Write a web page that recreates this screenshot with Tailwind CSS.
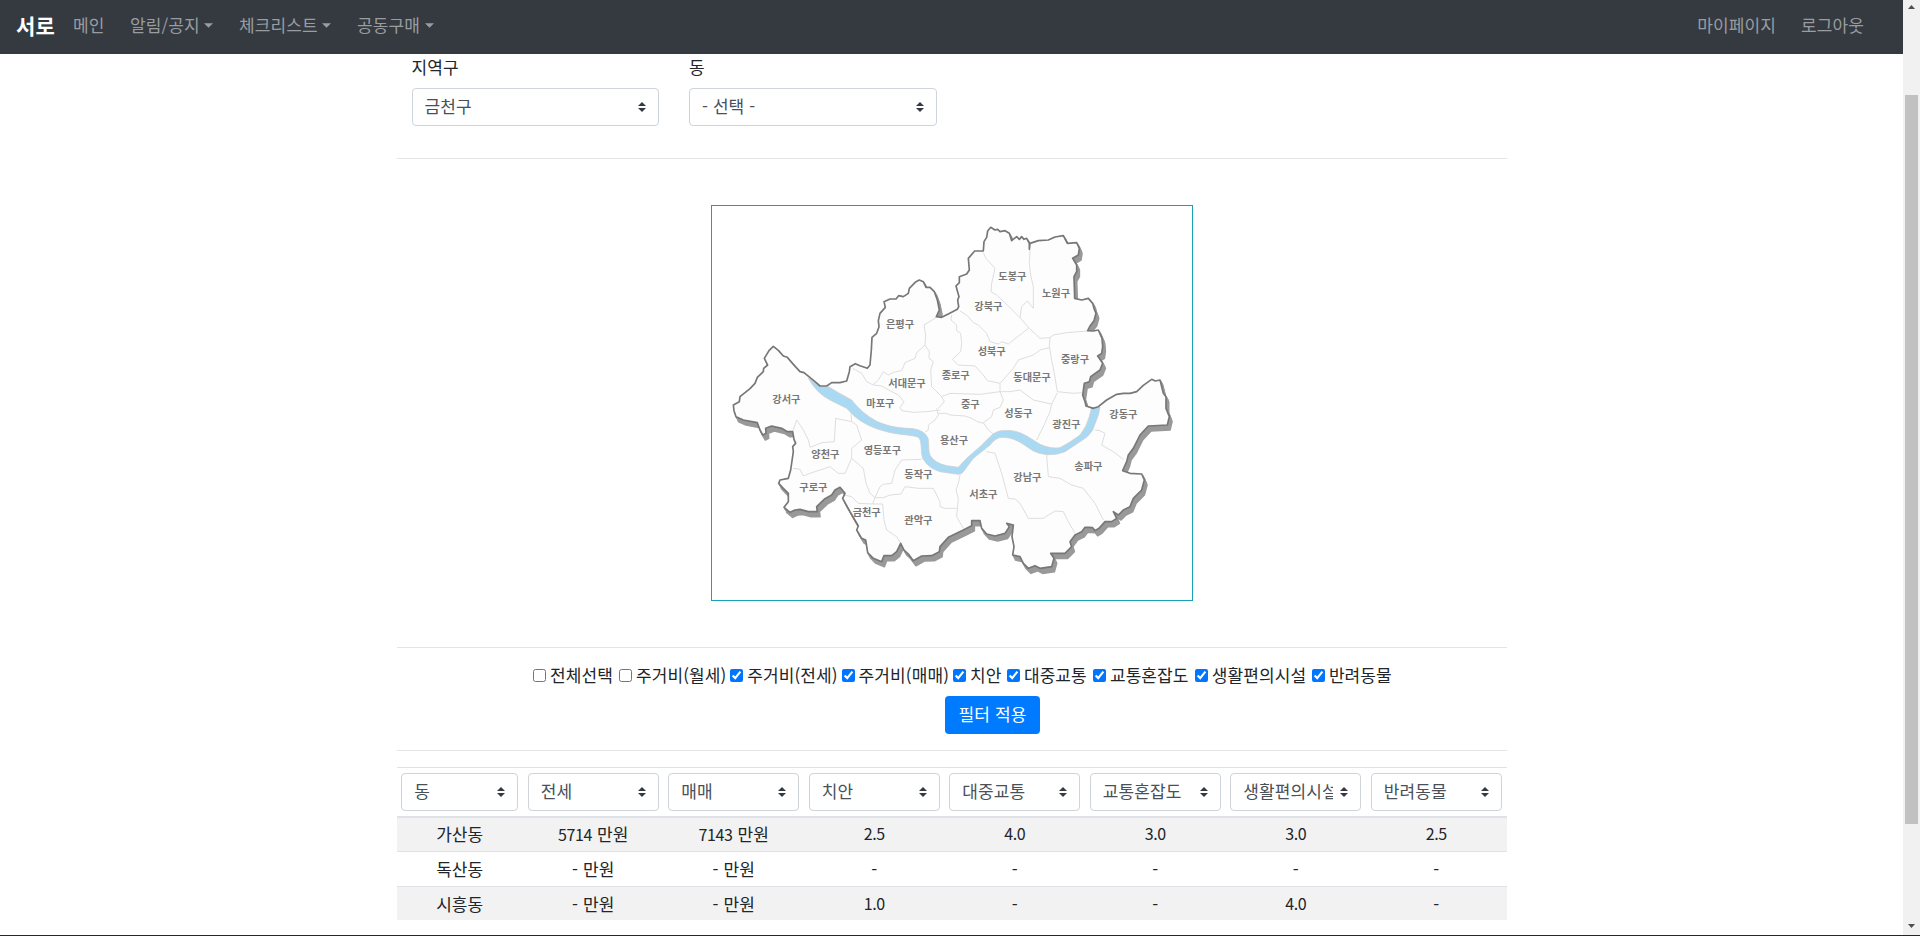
<!DOCTYPE html>
<html lang="ko">
<head>
<meta charset="utf-8">
<title>서로</title>
<script src="https://cdn.jsdelivr.net/npm/@tailwindcss/browser@4"></script>
</head>
<body class="flex h-[936px] w-[1920px] flex-col overflow-hidden bg-white font-['Noto_Sans_CJK_KR','Noto_Sans',sans-serif] text-[17px] leading-6 font-normal tracking-[0.1px] text-[#212529]">
<svg class="hidden">
  <symbol id="updown" viewBox="0 0 4 5"><path fill="#343a40" d="M2 0L0 2h4zm0 5L0 3h4z"/></symbol>
  <symbol id="caret" viewBox="0 0 10 5"><path fill="currentColor" d="M0 0h10L5 5z"/></symbol>
</svg>
<div class="flex h-[935px]">
  <div class="w-[1903px]">
    <nav class="flex h-[54px] items-center bg-[#343a40] pb-1 pl-4 pr-[39px] text-[#9a9da0]">
      <a class="mr-[17px] w-10 text-[21px] font-bold whitespace-nowrap text-white">서로</a>
      <a class="w-[57px]">메인</a>
      <a class="flex w-[109px] items-center gap-1"><span class="w-[70px] whitespace-nowrap">알림/공지</span><svg class="h-[5px] w-[9px]"><use href="#caret"/></svg></a>
      <a class="flex w-[118px] items-center gap-1"><span class="w-[79px] whitespace-nowrap">체크리스트</span><svg class="h-[5px] w-[9px]"><use href="#caret"/></svg></a>
      <a class="flex items-center gap-1"><span class="w-[64px] whitespace-nowrap">공동구매</span><svg class="h-[5px] w-[9px]"><use href="#caret"/></svg></a>
      <a class="ml-auto mr-[25px]">마이페이지</a>
      <a>로그아웃</a>
    </nav>
    <main class="mx-auto w-[1110px] pt-px">
      <div class="flex gap-[30px] pl-[15px] pb-8">
        <div class="w-[247.5px]">
          <div class="mb-[9px] h-6 leading-6">지역구</div>
          <div class="flex h-[38px] items-center justify-between rounded border border-[#ced4da] px-3 pb-0.5 text-[#495057]"><span>금천구</span><svg class="mt-0.5 h-2.5 w-2"><use href="#updown"/></svg></div>
        </div>
        <div class="w-[247.5px]">
          <div class="mb-[9px] h-6 leading-6">동</div>
          <div class="flex h-[38px] items-center justify-between rounded border border-[#ced4da] px-3 pb-0.5 text-[#495057]"><span>- 선택 -</span><svg class="mt-0.5 h-2.5 w-2"><use href="#updown"/></svg></div>
        </div>
      </div>
      <hr class="border-[#e5e5e5]">
      <div class="py-[46px]">
        <div class="mx-auto h-[396px] w-[482px] border border-[#17a2b8]">
          <svg class="h-[394px] w-[480px]" viewBox="36 18 1440 1182">
            <defs>
              <path id="city" d="M220 439L235 451 250 468 262 472 280 493 300 515 312 518 345 545 360 558 380 558 395 548 420 548 440 543 448 515 450 500 466 491 480 497 502 505 510 495 514 450 516 412 530 400 537 380 535 362 540 340 556 322 552 305 570 297 588 297 596 287 610 290 625 280 628 265 648 245 658 240 670 245 678 262 690 262 703 275 712 300 718 330 709 350 725 352 745 342 772 328 776 320 773 300 777 290 768 258 778 248 778 230 800 222 808 210 805 175 824 153 850 153 852 125 860 112 863 93 872 82 885 90 893 88 900 95 915 92 928 100 935 122 950 110 958 118 965 110 972 118 980 115 988 130 988 148 990 130 1015 122 1045 120 1065 111 1090 107 1102 130 1130 128 1138 145 1135 165 1118 175 1130 195 1130 215 1122 230 1124 295 1145 300 1165 295 1178 310 1182 325 1188 340 1182 362 1170 378 1163 392 1180 393 1195 390 1206 415 1208 440 1205 460 1193 468 1208 490 1200 510 1172 530 1168 545 1153 550 1148 585 1155 605 1158 618 1180 625 1195 620 1220 600 1250 583 1270 580 1290 580 1310 575 1330 556 1355 538 1366 543 1380 540 1390 580 1398 590 1398 625 1408 650 1402 675 1345 678 1320 705 1300 745 1285 765 1280 785 1268 812 1290 820 1325 822 1333 840 1325 870 1300 895 1290 920 1270 930 1255 945 1240 935 1250 955 1235 965 1215 965 1197 985 1185 992 1178 983 1165 982 1155 982 1145 995 1125 1005 1110 1025 1115 1040 1095 1060 1052 1060 1062 1075 1055 1100 1020 1105 1005 1097 985 1105 970 1090 960 1070 938 1065 942 1040 936 1010 940 975 920 970 928 980 915 1000 885 1008 860 1002 845 985 840 962 815 962 815 977 790 990 745 1012 720 1040 718 1055 695 1067 665 1068 640 1082 625 1062 612 1050 602 1030 590 1055 575 1067 552 1067 545 1085 520 1075 503 1058 497 1020 485 1015 470 990 475 978 450 935 428 895 435 880 420 862 405 870 395 885 375 896 350 920 352 935 325 935 300 928 285 930 270 937 252 922 265 905 265 880 250 865 236 850 240 840 265 835 272 810 280 755 278 740 287 730 282 718 278 695 262 695 245 685 215 678 197 685 198 700 188 705 180 690 172 668 130 660 108 650 102 632 100 615 118 605 120 590 150 566 165 550 172 532 190 515 191 505 203 495 193 475 207 452Z"/>
            </defs>
            <g fill="#999" stroke="#999" stroke-width="5" stroke-linejoin="round">
              <use href="#city" x="3" y="5"/><use href="#city" x="6" y="10"/><use href="#city" x="8" y="15"/>
            </g>
            <use href="#city" fill="#fdfdfd"/>
            <g fill="none" stroke="#dedede" stroke-width="3" stroke-linejoin="round">
              <path d="M458 505L485 520 500 545 520 555 545 558 575 575 595 585 612 605 600 622 605 632 640 637 680 635 720 630"/>
              <path d="M520 553L535 540 550 515 565 525 580 517 605 512 615 488 645 475 650 458 675 435 677 405 672 375 709 352"/>
              <path d="M675 435L688 455 687 475 700 485 692 510 695 560 725 590 733 605 715 625"/>
              <path d="M725 590L750 580 840 583 900 575"/>
              <path d="M755 345L753 360 770 375 770 392 782 400 785 430 782 455 757 478 775 495 825 498 850 525 862 542 900 550"/>
              <path d="M780 333L800 345 820 368 835 375 860 400 870 425 895 432 905 425 925 432 985 385"/>
              <path d="M850 158L858 175 885 205 875 250 873 275 890 285 925 318 960 353 988 385 1020 415 1050 413"/>
              <path d="M990 150L988 190 992 225 1000 260 1000 325 982 303 965 320 960 353"/>
              <path d="M1145 578L1120 580 1072 575 1063 520 1055 480 1048 440 1050 413 1060 405 1100 398 1163 393"/>
              <path d="M1048 443L1020 450 1000 465 955 480 940 505 900 550 900 575"/>
              <path d="M900 575L930 575 960 570 1000 600 1055 612 1072 578M1055 612L1050 635 1030 680 1010 720"/>
              <path d="M900 575L910 600 900 622 880 630 875 650 850 668 865 690 880 702"/>
              <path d="M715 640L740 640 750 645 795 648 815 655 830 664 850 670"/>
              <path d="M710 625L715 645 705 660 685 675 685 690 675 697"/>
              <path d="M278 695L290 660 310 690 325 720 330 742 365 728 403 725 407 655 455 665 453 640"/>
              <path d="M455 665L470 675 485 720 455 745 455 775 435 820 415 820 390 800 330 820 310 828 300 808 280 805"/>
              <path d="M455 775L490 805 498 850 510 880 525 893 550 893 570 885 603 882 615 860 655 865 700 865 720 905 720 920 735 925 770 925"/>
              <path d="M525 893L518 912 475 910 455 890 432 885M518 912L548 912 552 960 560 990 590 1010 602 1030"/>
              <path d="M525 893L540 860 550 853 575 850 585 810 605 780 665 778"/>
              <path d="M780 825L775 850 768 870 775 895 770 950 790 985"/>
              <path d="M860 755L885 760 905 820 925 895 945 897 960 910 985 955 1030 955 1045 945 1065 933 1090 935 1105 965 1125 1000"/>
              <path d="M1040 765L1045 830 1080 835 1115 855 1150 865 1185 910 1210 960"/>
              <path d="M1185 690L1200 692 1215 700 1205 735 1240 755 1270 778"/>
            </g>
            <path fill="#a9d9f3" stroke="#cfcfcf" stroke-width="2.5" d="M325 535L345 548 360 560 385 560 415 578 455 600Q485 640 530 664C570 682 600 684 640 686Q675 692 684 715C688 735 684 750 690 766Q705 790 740 797L775 802 800 775 840 740 870 710Q890 690 915 692 945 688 980 708L1020 733Q1055 748 1080 743 1110 728 1140 705 1160 680 1168 650L1175 623 1200 621 1195 645 1178 690Q1165 712 1140 725L1095 755Q1070 765 1045 764 1010 762 985 743C960 726 940 712 905 712Q888 712 870 735L820 775 790 815Q785 823 775 823L720 815Q685 805 668 775C660 745 668 725 655 712 640 704 590 704 560 695Q500 680 465 650L440 625 390 600Q350 580 325 535Z"/>
            <use href="#city" fill="none" stroke="#777" stroke-width="5" stroke-linejoin="round"/>
            <g class="tracking-normal" font-size="30.5" font-weight="700" fill="#777" text-anchor="middle">
              <text x="600" y="385">은평구</text><text x="621" y="561">서대문구</text><text x="259" y="610">강서구</text><text x="541" y="621">마포구</text><text x="937" y="241">도봉구</text><text x="1068" y="292">노원구</text><text x="865" y="331">강북구</text><text x="875" y="466">성북구</text><text x="1125" y="490">중랑구</text><text x="767" y="538">종로구</text><text x="996" y="544">동대문구</text><text x="811" y="625">중구</text><text x="376" y="775">양천구</text><text x="547" y="763">영등포구</text><text x="762" y="733">용산구</text><text x="655" y="835">동작구</text><text x="340" y="873">구로구</text><text x="500" y="949">금천구</text><text x="655" y="972">관악구</text><text x="955" y="652">성동구</text><text x="1099" y="685">광진구</text><text x="1270" y="655">강동구</text><text x="1165" y="811">송파구</text><text x="982" y="844">강남구</text><text x="850" y="895">서초구</text>
            </g>
          </svg>
        </div>
      </div>
      <hr class="border-[#e5e5e5]">
      <div class="flex h-12 items-center whitespace-nowrap pl-[136.5px] pt-[7px]">
        <label class="flex w-[86px] items-center gap-1"><input type="checkbox" class="size-[13px]"><span class="-mt-0.5">전체선택</span></label>
        <label class="flex w-[111.3px] items-center gap-1"><input type="checkbox" class="size-[13px]"><span class="-mt-0.5">주거비(월세)</span></label>
        <label class="flex w-[111.3px] items-center gap-1"><input type="checkbox" checked class="size-[13px]"><span class="-mt-0.5">주거비(전세)</span></label>
        <label class="flex w-[111.3px] items-center gap-1"><input type="checkbox" checked class="size-[13px]"><span class="-mt-0.5">주거비(매매)</span></label>
        <label class="flex w-[54px] items-center gap-1"><input type="checkbox" checked class="size-[13px]"><span class="-mt-0.5">치안</span></label>
        <label class="flex w-[86px] items-center gap-1"><input type="checkbox" checked class="size-[13px]"><span class="-mt-0.5">대중교통</span></label>
        <label class="flex w-[101.8px] items-center gap-1"><input type="checkbox" checked class="size-[13px]"><span class="-mt-0.5">교통혼잡도</span></label>
        <label class="flex w-[117.2px] items-center gap-1"><input type="checkbox" checked class="size-[13px]"><span class="-mt-0.5">생활편의시설</span></label>
        <label class="flex items-center gap-1"><input type="checkbox" checked class="size-[13px]"><span class="-mt-0.5">반려동물</span></label>
      </div>
      <button class="ml-[548.5px] mb-4 flex h-[38px] w-[95px] items-center justify-center rounded bg-[#007bff] pb-0.5 tracking-[0.1px] whitespace-nowrap text-white">필터 적용</button>
      <hr class="mb-4 border-[#e5e5e5]">
      <div class="grid h-[51px] grid-cols-[126.5px_repeat(7,140.5px)] border-t border-b-2 border-t-[#dee2e6] border-b-[#dee2e6] pt-[5px] text-[#495057]">
        <div class="mx-[4.8px] flex h-[38px] items-center gap-1 rounded border border-[#ced4da] pl-3 pr-3 pb-0.5"><span class="flex-1 overflow-hidden whitespace-nowrap">동</span><svg class="mt-0.5 h-2.5 w-2"><use href="#updown"/></svg></div>
        <div class="mx-[4.8px] flex h-[38px] items-center gap-[7px] rounded border border-[#ced4da] pl-3 pr-3 pb-0.5"><span class="flex-1 overflow-hidden whitespace-nowrap">전세</span><svg class="mt-0.5 h-2.5 w-2"><use href="#updown"/></svg></div>
        <div class="mx-[4.8px] flex h-[38px] items-center gap-[7px] rounded border border-[#ced4da] pl-3 pr-3 pb-0.5"><span class="flex-1 overflow-hidden whitespace-nowrap">매매</span><svg class="mt-0.5 h-2.5 w-2"><use href="#updown"/></svg></div>
        <div class="mx-[4.8px] flex h-[38px] items-center gap-[7px] rounded border border-[#ced4da] pl-3 pr-3 pb-0.5"><span class="flex-1 overflow-hidden whitespace-nowrap">치안</span><svg class="mt-0.5 h-2.5 w-2"><use href="#updown"/></svg></div>
        <div class="mx-[4.8px] flex h-[38px] items-center gap-[7px] rounded border border-[#ced4da] pl-3 pr-3 pb-0.5"><span class="flex-1 overflow-hidden whitespace-nowrap">대중교통</span><svg class="mt-0.5 h-2.5 w-2"><use href="#updown"/></svg></div>
        <div class="mx-[4.8px] flex h-[38px] items-center gap-[7px] rounded border border-[#ced4da] pl-3 pr-3 pb-0.5"><span class="flex-1 overflow-hidden whitespace-nowrap">교통혼잡도</span><svg class="mt-0.5 h-2.5 w-2"><use href="#updown"/></svg></div>
        <div class="mx-[4.8px] flex h-[38px] items-center gap-[7px] rounded border border-[#ced4da] pl-3 pr-3 pb-0.5"><span class="flex-1 overflow-hidden whitespace-nowrap">생활편의시설</span><svg class="mt-0.5 h-2.5 w-2"><use href="#updown"/></svg></div>
        <div class="mx-[4.8px] flex h-[38px] items-center gap-[7px] rounded border border-[#ced4da] pl-3 pr-3 pb-0.5"><span class="flex-1 overflow-hidden whitespace-nowrap">반려동물</span><svg class="mt-0.5 h-2.5 w-2"><use href="#updown"/></svg></div>
      </div>
      <div class="grid h-[33px] grid-cols-[126.5px_repeat(7,140.5px)] bg-[#f2f2f2] text-center leading-[31px]">
        <span>가산동</span><span><span class="text-[16px] tracking-[-0.4px]">5714</span> 만원</span><span><span class="text-[16px] tracking-[-0.4px]">7143</span> 만원</span><span class="text-[16px] leading-[31px] tracking-[-0.4px]">2.5</span><span class="text-[16px] leading-[31px] tracking-[-0.4px]">4.0</span><span class="text-[16px] leading-[31px] tracking-[-0.4px]">3.0</span><span class="text-[16px] leading-[31px] tracking-[-0.4px]">3.0</span><span class="text-[16px] leading-[31px] tracking-[-0.4px]">2.5</span>
      </div>
      <div class="grid h-[35px] grid-cols-[126.5px_repeat(7,140.5px)] border-t border-[#dee2e6] text-center leading-[33px]">
        <span>독산동</span><span>- 만원</span><span>- 만원</span><span>-</span><span>-</span><span>-</span><span>-</span><span>-</span>
      </div>
      <div class="grid h-[34px] grid-cols-[126.5px_repeat(7,140.5px)] border-t border-[#dee2e6] bg-[#f2f2f2] text-center leading-[33px]">
        <span>시흥동</span><span>- 만원</span><span>- 만원</span><span class="text-[16px] leading-[33px] tracking-[-0.4px]">1.0</span><span>-</span><span>-</span><span class="text-[16px] leading-[33px] tracking-[-0.4px]">4.0</span><span>-</span>
      </div>
    </main>
  </div>
  <div class="flex w-[17px] flex-col items-center bg-[#f1f1f1] pt-[5px] pb-[7px]">
    <svg class="h-1 w-[7px]" viewBox="0 0 7 4"><path fill="#505050" d="M0 4L3.5 0 7 4z"/></svg>
    <div class="mt-[86px] h-[729px] w-[13px] bg-[#c1c1c1]"></div>
    <svg class="mt-auto h-1 w-[7px]" viewBox="0 0 7 4"><path fill="#505050" d="M0 0h7L3.5 4z"/></svg>
  </div>
</div>
<div class="h-px bg-[#20282d]"></div>
</body>
</html>
